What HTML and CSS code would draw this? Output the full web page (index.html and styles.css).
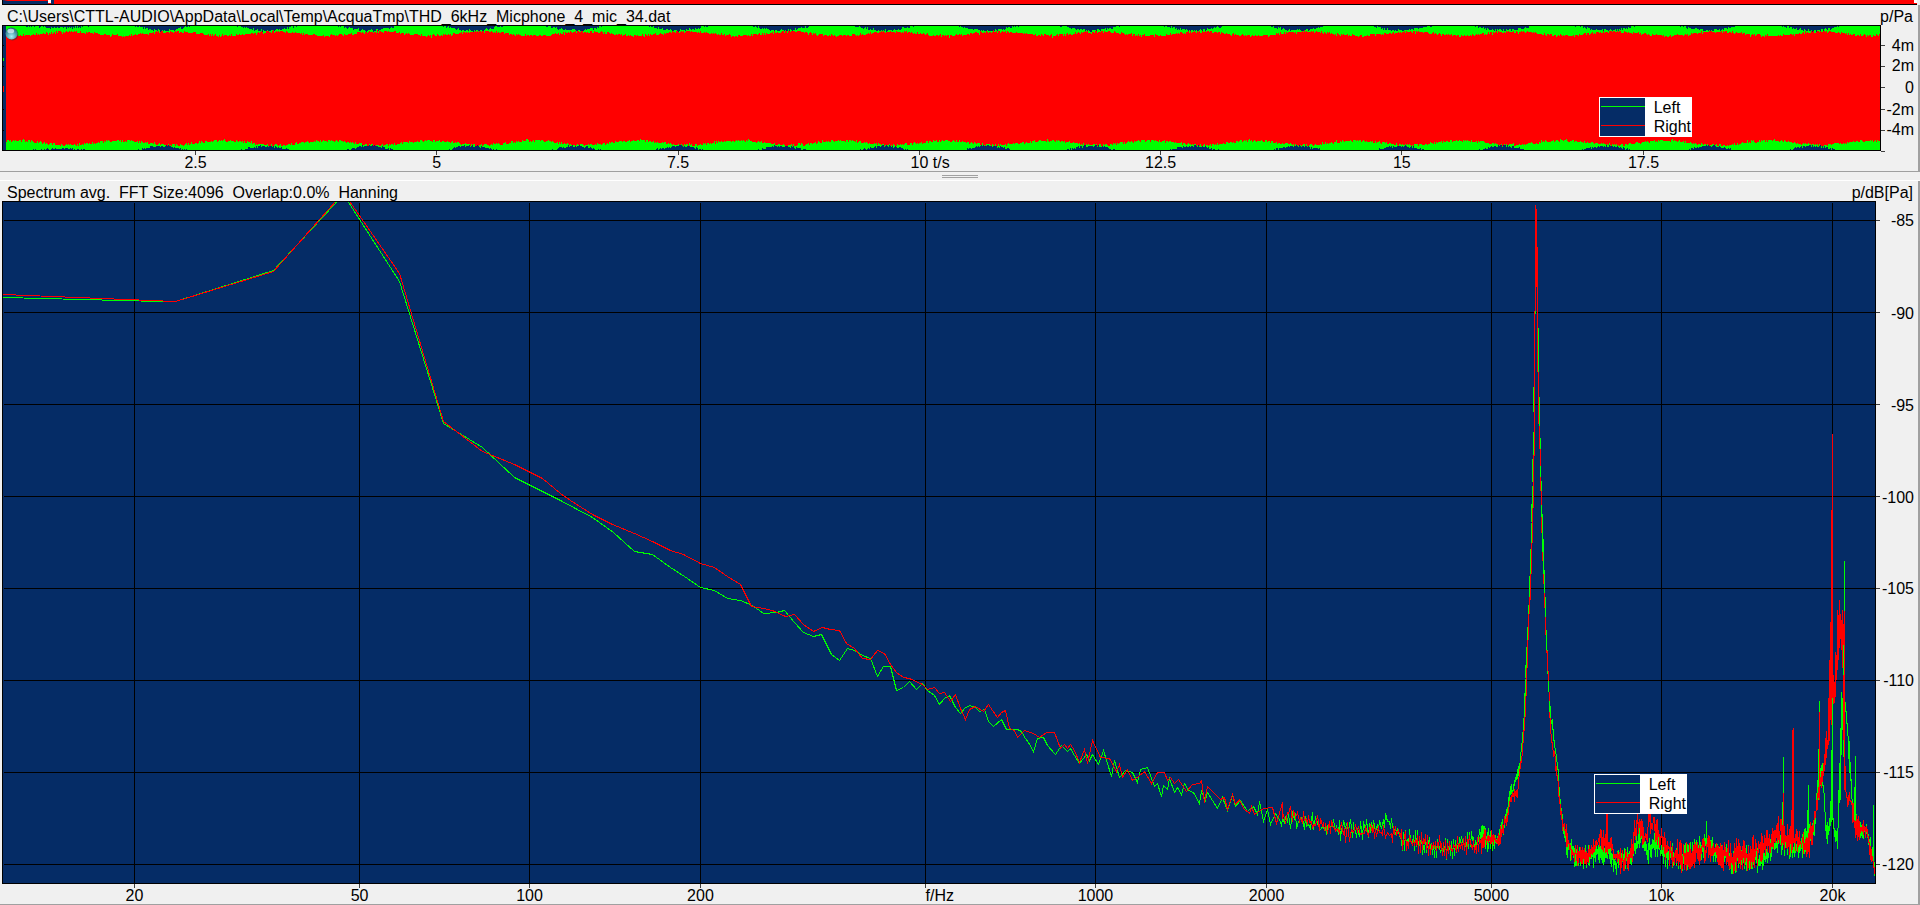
FILE: index.html
```html
<!DOCTYPE html>
<html lang="en">
<head>
<meta charset="utf-8">
<title>THD 6kHz Micphone</title>
<link rel="stylesheet" href="styles.css">
</head>
<body>
<div class="strip"><span class="strip-gap"></span><span class="strip-mark"></span><span class="strip-tail"></span><span class="strip-corner"></span></div>

<main class="panels">
<section class="panel panel-time">
  <header class="panel-head"><h1 class="panel-title">C:\Users\CTTL-AUDIO\AppData\Local\Temp\AcquaTmp\THD_6kHz_Micphone_4_mic_34.dat</h1><span class="unit">p/Pa</span></header>
  <div class="plot">
    <svg class="chart" viewBox="2 25 1879 126" preserveAspectRatio="none">
      <path class="green" id="wave-left"/>
      <path class="red" id="wave-right"/>
      <path class="grid" d="M2 45.5h2M2 66.5h2M2 109.5h2M2 130.5h2"/>
    </svg>
    <svg class="orb" viewBox="0 0 14 14" width="14" height="14">
      <defs><radialGradient id="glass" cx="50%" cy="75%" r="75%"><stop offset="0" stop-color="#a9f3f6"/><stop offset=".5" stop-color="#55a9b4"/><stop offset="1" stop-color="#1f5b68"/></radialGradient></defs>
      <circle cx="7.500" cy="7.500" r="6" fill="#333" opacity=".5"/>
      <circle cx="6.500" cy="6.500" r="6" fill="url(#glass)"/>
      <ellipse cx="5.800" cy="4" rx="3.400" ry="2.300" fill="#d5eff2" opacity=".8"/>
    </svg>
    <div class="legend legend-time">
      <svg class="swatch" viewBox="0 0 45 38"><path class="green" d="M1 8.500h44"/><path class="red" d="M1 27.500h44"/></svg>
      <ul class="names"><li>Left</li><li>Right</li></ul>
    </div>
  </div>
  <svg class="axis-y">
    <g class="tick"><line x2="4" y1="16.3%" y2="16.3%"/><line x2="4" y1="32.9%" y2="32.9%"/><line x2="4" y1="49.8%" y2="49.8%"/><line x2="4" y1="67.1%" y2="67.1%"/><line x2="4" y1="83.7%" y2="83.7%"/><line x2="4" y1="100.3%" y2="100.3%"/></g>
    <g class="label-y" transform="translate(-4 5)"><text x="100%" y="16.3%">4m</text><text x="100%" y="32.9%">2m</text><text x="100%" y="50.0%">0</text><text x="100%" y="67.1%">-2m</text><text x="100%" y="83.7%">-4m</text></g>
  </svg>
  <svg class="axis-x">
    <g class="tick"><line x1="10.300%" x2="10.300%" y2="4"/><line x1="23.140%" x2="23.140%" y2="4"/><line x1="35.980%" x2="35.980%" y2="4"/><line x1="48.830%" x2="48.830%" y2="4"/><line x1="61.660%" x2="61.660%" y2="4"/><line x1="74.500%" x2="74.500%" y2="4"/><line x1="87.360%" x2="87.360%" y2="4"/></g>
    <g class="label-x"><text x="10.300%" y="17">2.5</text><text x="23.140%" y="17">5</text><text x="35.980%" y="17">7.5</text><text class="from" x="48.830%" dx="-9" y="17">10 t/s</text><text x="61.660%" y="17">12.5</text><text x="74.500%" y="17">15</text><text x="87.360%" y="17">17.5</text></g>
  </svg>
</section>

<div class="splitter" role="separator"><span class="grip"></span></div>

<section class="panel panel-spectrum">
  <header class="panel-head"><h2 class="panel-title">Spectrum avg.&nbsp; FFT Size:4096&nbsp; Overlap:0.0%&nbsp; Hanning</h2><span class="unit">p/dB[Pa]</span></header>
  <div class="plot">
    <svg class="chart" viewBox="2 201 1874 683" preserveAspectRatio="none">
      <path class="grid" d="M4 220.500H1876M4 312.500H1876M4 404.500H1876M4 496.500H1876M4 588.500H1876M4 680.500H1876M4 772.500H1876M4 864.500H1876M134.500 203V884M359.500 203V884M529.500 203V884M700.500 203V884M925.500 203V884M1095.500 203V884M1266.500 203V884M1491.500 203V884M1661.500 203V884M1832.500 203V884"/>
      <path class="green" id="spec-left"/>
      <path class="red" id="spec-right"/>
      <path class="green" id="spec-left-front"/>
    </svg>
    <div class="legend legend-spectrum">
      <svg class="swatch" viewBox="0 0 45 38"><path class="green" d="M1 8.500h44"/><path class="red" d="M1 27.500h44"/></svg>
      <ul class="names"><li>Left</li><li>Right</li></ul>
    </div>
  </div>
  <svg class="axis-y">
    <g class="tick"><line x2="4" y1="2.855%" y2="2.855%"/><line x2="4" y1="16.330%" y2="16.330%"/><line x2="4" y1="29.800%" y2="29.800%"/><line x2="4" y1="43.270%" y2="43.270%"/><line x2="4" y1="56.730%" y2="56.730%"/><line x2="4" y1="70.200%" y2="70.200%"/><line x2="4" y1="83.670%" y2="83.670%"/><line x2="4" y1="97.140%" y2="97.140%"/></g>
    <g class="label-y" transform="translate(-4 6)"><text x="100%" y="2.855%">-85</text><text x="100%" y="16.330%">-90</text><text x="100%" y="29.800%">-95</text><text x="100%" y="43.270%">-100</text><text x="100%" y="56.730%">-105</text><text x="100%" y="70.200%">-110</text><text x="100%" y="83.670%">-115</text><text x="100%" y="97.140%">-120</text></g>
  </svg>
  <svg class="axis-x">
    <g class="tick"><line x1="7.070%" x2="7.070%" y2="4"/><line x1="19.080%" x2="19.080%" y2="4"/><line x1="28.150%" x2="28.150%" y2="4"/><line x1="37.270%" x2="37.270%" y2="4"/><line x1="49.280%" x2="49.280%" y2="4"/><line x1="58.350%" x2="58.350%" y2="4"/><line x1="67.480%" x2="67.480%" y2="4"/><line x1="79.480%" x2="79.480%" y2="4"/><line x1="88.550%" x2="88.550%" y2="4"/><line x1="97.680%" x2="97.680%" y2="4"/></g>
    <g class="label-x"><text x="7.070%" y="17">20</text><text x="19.080%" y="17">50</text><text x="28.150%" y="17">100</text><text x="37.270%" y="17">200</text><text class="from" x="49.280%" y="17">f/Hz</text><text x="58.350%" y="17">1000</text><text x="67.480%" y="17">2000</text><text x="79.480%" y="17">5000</text><text x="88.550%" y="17">10k</text><text x="97.680%" y="17">20k</text></g>
  </svg>
</section>
</main>
<script src="charts.js"></script>
</body>
</html>
```
FILE: styles.css
```css
* { box-sizing: border-box; }

body {
  margin: 0;
  min-height: 100vh;
  display: flex;
  flex-direction: column;
  background: #f0f0f0;
  color: #000;
  font: 16px/20px "Liberation Sans", Arial, sans-serif;
}

.strip {
  display: flex;
  height: 5px;
  margin: 0 3px 0 2px;
  border-left: 1px solid #000;
  border-bottom: 1px solid #000;
  background: #f00;
}
.strip-gap { width: 45px; background: #052c66; border-top: 1px solid #f00; border-left: 5px solid #052c66; }
.strip-mark { width: 3px; height: 3px; background: #fff; }
.strip-tail { width: 3px; background: #052c66; }
.strip-corner { width: 3px; height: 3px; margin-left: auto; background: #fff; }

.panels { flex: 1; display: flex; flex-direction: column; }

.panel {
  display: grid;
  padding-left: 2px;
  border-right: 2px solid #a0a0a0;
  border-bottom: 1px solid #a0a0a0;
}
.panel-time { grid-template: 20px 126px 20px / 1fr 37px; }
.panel-spectrum { flex: 1; grid-template: 20px 1fr 20px / 1fr 42px; }

.panel-head {
  grid-column: 1 / -1;
  display: flex;
  justify-content: space-between;
  padding: 2px 5px 0 5px;
}
.panel-title { margin: 0; font-size: 16px; font-weight: 400; line-height: 20px; }

.plot { position: relative; min-height: 0; background: #052c66; border: 1px solid #000; }
.chart { position: absolute; inset: -1px; width: calc(100% + 2px); height: calc(100% + 2px); }
.plot::after { content: ""; position: absolute; inset: -1px; border: 1px solid #000; }
.orb { position: absolute; left: 2px; top: 1px; z-index: 1; }

path { fill: none; stroke-width: 1px; vector-effect: non-scaling-stroke; shape-rendering: crispEdges; }
.green { stroke: #0f0; }
.red { stroke: #f00; }
.grid { stroke: #000; }

.legend {
  position: absolute;
  right: 188px;
  display: flex;
  width: 93px;
  border: 1px solid #fff;
  background: #fff;
}
.legend-time { bottom: 13px; }
.legend-spectrum { bottom: 69px; }
.swatch { width: 45px; height: 38px; background: #052c66; }
.names { margin: 0; padding: 0 0 0 9px; list-style: none; line-height: 19px; }

.axis-x, .axis-y { display: block; width: 100%; height: 100%; overflow: visible; }
.tick { stroke: #404040; stroke-width: 1px; shape-rendering: crispEdges; }
.label-x { text-anchor: middle; }
.label-y { text-anchor: end; }
.label-x .from { text-anchor: start; }

.splitter {
  display: flex;
  justify-content: center;
  align-items: center;
  height: 9px;
  border-bottom: 1px solid #fff;
}
.grip { width: 36px; height: 3px; border: solid #a0a0a0; border-width: 1px 0; }
```
FILE: charts.js
```js
let seed = 7;
function rnd() {
  seed = (seed * 1103515245 + 12345) % 2147483648;
  return seed / 2147483648;
}
const draw = (id, d) => document.getElementById(id).setAttribute('d', d);

/* Time signal: one column per unit, with the beat between both channels. */
let left = 'M3.500 58v3', right = 'M3.500 86v6';
for (let x = 6; x < 1880; x++) {
  const c = Math.cos(2 * Math.PI * (x - 163) / 103.06);
  const r = Math.cos(2 * Math.PI * (x - 172) / 103.06);
  const early = x < 130 ? 0.4 : 1;
  const jt = rnd(), jb = rnd();
  const gt = 26 + Math.max(0, Math.round((c + 0.15) * 3.8 * early + jt * 2.4 - 1.1));
  const gb = 150 - Math.max(0, Math.round((c - 0.15) * 4.6 * early + jb * 2.4 - 1.1));
  const rt = Math.round(33.6 - 2 * r + rnd() * 2.4 - 1.2 + (rnd() > 0.93 ? 1 : 0));
  const rb = Math.round(142.9 + 2.2 * r + rnd() * 2.4 - 1.2 - (rnd() > 0.93 ? 1 : 0));
  left += `M${x + 0.5} ${gt}V${gb}`;
  right += `M${x + 0.5} ${rt}V${rb}`;
}
draw('wave-left', left);
draw('wave-right', right);

const leftLow = [3,297,160,301,175,301,273,270,343,194,399,281,443,423,482,447,514,477,560,500,592,517,613,532,634,551,652,554,670,567,684,576,700,587,714,590,727,598,740,600,752,605,763,613,776,612,784,610,794,622,803,632,813,636,821,634,831,654,839,660,847,648,854,650,862,655,870,658,877,676,883,666,890,666,896,690,903,687,909,681,916,689,922,683,927,690,934,695,939,704,944,698,949,695,955,707,960,713,964,708,969,705,975,707,979,711,984,709,988,721,993,726,1001,719,1006,729,1017,729,1021,731,1025,738,1028,742,1033,751,1037,738,1043,737,1047,745,1055,754,1061,745,1067,751,1070,748,1074,755,1079,763,1086,754,1089,760,1092,754,1098,764,1103,750,1111,776,1114,760,1119,777,1125,770,1132,772,1137,782,1140,769,1147,767,1154,786,1157,783,1161,796,1163,785,1167,789,1169,778,1174,792,1177,787,1181,794,1184,783,1188,790,1193,792,1199,803,1201,791,1205,800,1207,792,1217,808,1222,797,1227,810,1232,795,1235,806,1240,800,1247,811,1253,806,1257,814,1259,801,1263,821,1267,809,1270,824,1275,813,1280,821];
const rightLow = [3,294,175,301,273,271,343,192,399,273,443,421,482,451,514,464,542,478,560,493,570,500,592,514,612,524,634,533,652,541,670,550,683,554,700,563,714,567,727,576,740,584,751,606,763,608,772,610,785,616,794,614,803,624,813,631,822,627,830,629,839,630,846,643,854,648,862,658,870,659,877,650,884,653,890,664,896,672,903,677,909,678,922,684,927,689,934,687,939,693,944,692,950,701,955,694,960,708,965,719,969,709,975,706,983,711,988,704,992,710,997,717,1001,712,1005,710,1009,728,1014,730,1017,737,1024,730,1033,733,1039,737,1046,732,1054,732,1060,748,1064,744,1067,748,1070,744,1074,750,1079,762,1084,749,1087,763,1092,740,1100,757,1109,758,1116,771,1119,764,1122,777,1127,769,1132,780,1138,776,1144,771,1151,783,1157,772,1164,772,1167,780,1170,777,1174,783,1178,779,1186,791,1192,784,1199,783,1201,780,1204,802,1207,786,1220,799,1224,797,1227,809,1232,794,1235,804,1239,799,1243,808,1249,813,1251,806,1254,814,1263,808,1272,807,1276,823,1282,802];

/* Above 2 kHz: x, upper and lower edge of the noise band. */
const leftHigh = [[1281,809,824],[1300,811,828],[1320,818,832],[1345,822,838],[1365,822,837],[1375,818,832],[1383,814,826],[1392,818,832],[1400,828,848],[1420,833,851],[1440,838,856],[1450,842,857],[1458,834,852],[1475,834,850],[1483,826,846],[1492,832,851],[1497,836,846],[1502,822,834],[1507,806,820],[1509,786,808],[1512,782,795],[1516,770,788],[1519,764,772],[1522,732,748],[1524,698,715],[1526,660,678],[1528,606,622],[1530,560,580],[1532,500,518],[1533,455,482],[1534,388,412],[1535,202,260],[1537,202,320],[1538,340,412],[1540,440,477],[1541,490,510],[1543,545,565],[1545,600,615],[1546,635,650],[1548,670,690],[1550,708,730],[1552,718,732],[1554,736,748],[1557,754,772],[1559,790,800],[1562,814,824],[1566,836,852],[1573,846,862],[1585,848,866],[1600,845,858],[1608,842,860],[1616,856,872],[1630,850,862],[1636,833,846],[1641,833,845],[1646,846,862],[1656,836,850],[1664,845,864],[1680,850,866],[1696,840,862],[1706,834,848],[1712,842,856],[1728,848,868],[1758,850,868],[1768,842,860],[1778,832,848],[1790,840,854],[1800,842,856],[1808,825,845],[1814,812,835],[1819,758,800],[1822,758,790],[1824,795,812],[1826,823,848],[1829,818,838],[1831,773,815],[1833,820,830],[1835,828,842],[1837,823,848],[1839,763,807],[1841,692,765],[1843,650,760],[1845,700,720],[1847,712,745],[1849,740,775],[1852,796,812],[1857,816,836],[1866,822,840],[1872,845,862],[1875,872,882]];
const rightHigh = [[1282,804,822],[1293,804,822],[1305,812,830],[1320,818,832],[1345,824,839],[1365,824,839],[1378,824,840],[1390,825,838],[1400,831,846],[1420,834,850],[1440,838,855],[1450,844,855],[1458,838,850],[1475,838,853],[1483,830,850],[1491,830,843],[1497,836,848],[1502,824,837],[1507,810,824],[1510,793,806],[1513,788,803],[1517,790,800],[1519,768,776],[1522,744,756],[1524,718,731],[1526,674,690],[1528,620,630],[1530,580,600],[1532,520,540],[1533,480,500],[1534,412,430],[1535,202,261],[1537,202,350],[1538,370,425],[1540,440,480],[1541,505,520],[1543,560,590],[1545,612,635],[1547,650,670],[1549,690,715],[1551,734,744],[1554,748,762],[1557,770,786],[1559,794,806],[1562,818,832],[1566,824,842],[1571,848,856],[1580,845,862],[1590,842,858],[1600,832,846],[1610,838,852],[1616,850,862],[1621,853,870],[1630,850,864],[1634,820,848],[1637,812,836],[1642,814,842],[1646,830,846],[1649,808,832],[1657,820,842],[1664,835,853],[1674,843,868],[1690,844,866],[1705,836,858],[1712,840,856],[1725,844,868],[1745,843,868],[1762,836,860],[1774,832,852],[1780,820,842],[1786,828,850],[1798,828,850],[1804,836,852],[1811,824,854],[1815,803,823],[1819,760,802],[1822,770,792],[1825,738,768],[1828,715,748],[1830,680,736],[1832,640,710],[1834,680,706],[1836,640,680],[1839,604,648],[1841,620,650],[1843,615,700],[1845,770,800],[1847,790,812],[1849,785,802],[1852,797,823],[1855,813,843],[1860,815,840],[1866,815,838],[1869,837,857],[1872,850,863],[1875,870,883]];

function trace(low, band) {
  let d = 'M';
  for (let i = 0; i < low.length; i += 2) d += `${low[i] + 0.5} ${low[i + 1] + 0.5} `;
  let i = 0, flip = false, x = band[0][0];
  while (x <= 1875) {
    while (i < band.length - 2 && band[i + 1][0] <= x) i++;
    const [x0, a0, b0] = band[i], [x1, a1, b1] = band[i + 1];
    const t = (x - x0) / (x1 - x0);
    const rough = x < 1505 ? 3 : x > 1562 && x < 1812 ? 5 : 0;
    const top = a0 + (a1 - a0) * t - rough, bottom = b0 + (b1 - b0) * t + rough;
    const depth = (bottom - top) * 0.6 * rnd();
    const y = flip ? top + depth : bottom - depth;
    d += `${x + 0.5} ${Math.min(882, Math.round(y)) + 0.5} `;
    if (x < 1400) { x += rnd() > 0.5 ? 2 : 1; flip = !flip; }
    else { if (!flip || x < 1480) x += 1; flip = !flip; }
  }
  return d;
}
draw('spec-left', trace(leftLow, leftHigh) + 'M1706.500 821V850M1783.500 757V840M1782.500 802V840M1808.500 785V845M1807.500 810V835M1818.500 749V800M1819.500 701V760M1855.500 756V830M1854.500 787V820M1873.500 805V860M1844.500 561V720');
draw('spec-right', trace(rightLow, rightHigh) + 'M1606.500 810V850M1607.500 812V845M1778.500 816V840M1783.500 793V845M1792.500 730V850M1793.500 728V840M1791.500 810V850M1819.500 712V800M1830.500 622V720M1831.500 510V725M1832.500 434V700M1836.500 655V680M1837.500 610V670M1839.500 600V645M1842.500 610V665M1844.500 611V790M1843.500 630V740M1829.500 660V740M1828.500 698V745M1835.500 652V697M1838.500 615V660M1841.500 620V650');
draw('spec-left-front', 'M1831.500 750V822M1832.500 698V820M1840.500 735V800M1841.500 692V755M1843.500 645V675M1538.500 339V353M1533.500 387V412M1539.500 415V426M1532.500 459V482M1540.500 466V477M1531.500 504V522M1541.500 505V517M1530.500 549V565M1542.500 533V552M1529.500 576V588M1543.500 555V574M1544.500 577V593M1545.500 603V617M1546.500 633V650M1526.500 647V658M1525.500 665V678M1524.500 693V705M1548.500 681V692M1549.500 701V712');
```
